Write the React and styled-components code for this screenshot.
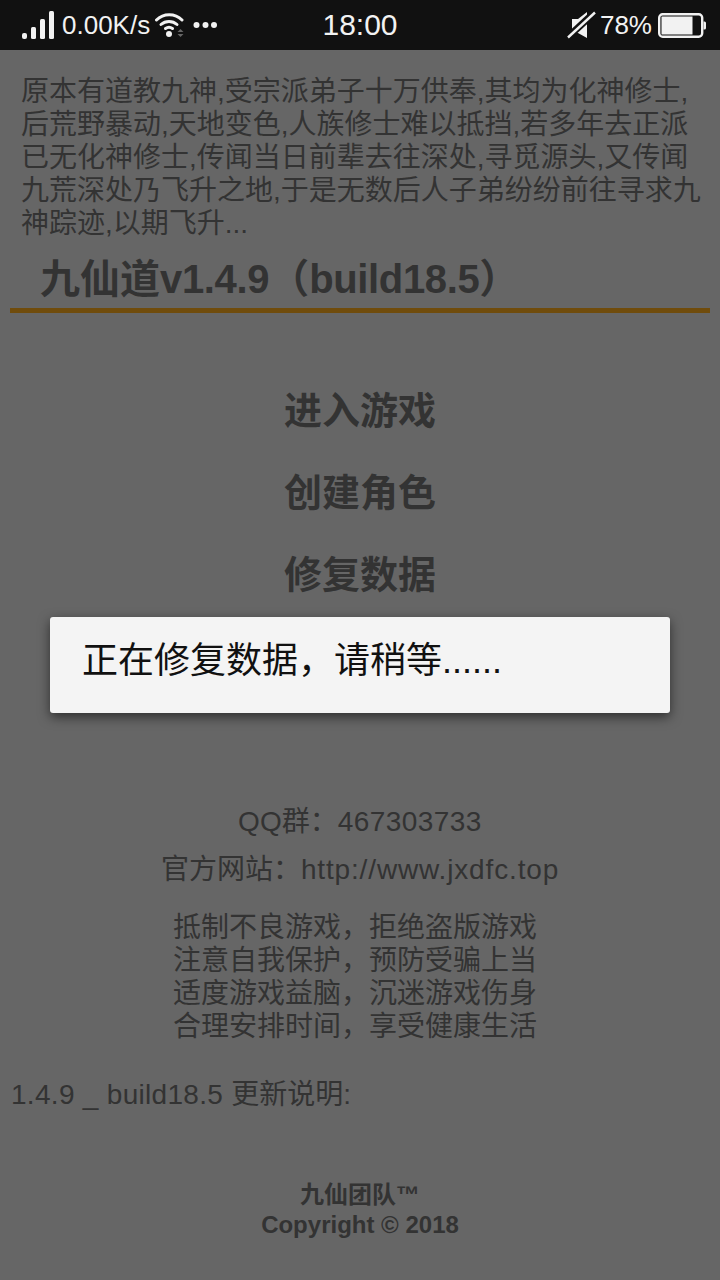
import styled, { createGlobalStyle } from 'styled-components';

const GlobalStyle = createGlobalStyle`
  html, body {
    margin: 0;
    padding: 0;
    background: #666;
  }
  body {
    font-family: 'Liberation Sans', 'Noto Sans CJK SC', sans-serif;
  }
`;

const Page = styled.div`
  position: relative;
  width: 720px;
  height: 1280px;
  overflow: hidden;
  background: #666;
  color: #333;
`;

const StatusBar = styled.div`
  height: 50px;
  background: #111;
  color: #f2f2f2;
  display: grid;
  grid-template-columns: 1fr auto 1fr;
  align-items: center;
`;

const StatusSide = styled.div`
  display: flex;
  align-items: center;
  justify-content: ${props => (props.$right ? 'flex-end' : 'flex-start')};
  padding: ${props => (props.$right ? '0 14px 0 0' : '0 0 0 22px')};
`;

const StatusText = styled.span`
  margin: 0 ${props => props.$mr || 0}px 0 ${props => props.$ml || 0}px;
  font-size: ${props => props.$size || 26}px;
  line-height: 50px;
  white-space: nowrap;
`;

const Dots = styled.svg`
  margin-left: 6px;
`;

const Intro = styled.p`
  margin: 0;
  padding: 25px 14px 0 21px;
  font-size: 28px;
  line-height: 33px;
`;

const Title = styled.h1`
  margin: 0 10px;
  padding: 13px 0 3px 30px;
  border-bottom: 5px solid #704c0c;
  font-size: 40px;
  line-height: 52px;
  font-weight: 700;
  white-space: nowrap;
`;

const Latin = styled.span`
  letter-spacing: ${props => props.$spacing}px;
`;

const Menu = styled.nav`
  display: flex;
  flex-direction: column;
  align-items: center;
  gap: 36px;
  padding-top: 75px;
`;

const MenuItem = styled.a`
  font-size: 38px;
  line-height: 46px;
  font-weight: 700;
`;

const Info = styled.div`
  display: flex;
  flex-direction: column;
  align-items: center;
  padding-top: 207px;
`;

const InfoLine = styled.div`
  font-size: 28px;
  line-height: 33px;
  margin-bottom: 15px;
`;

const Notice = styled.div`
  margin-top: 10px;
  padding-right: 10px;
  font-size: 28px;
  line-height: 33px;
  text-align: center;
`;

const Changelog = styled.div`
  padding: 35px 0 0 11px;
  font-size: 28px;
  line-height: 33px;
`;

const Footer = styled.div`
  padding-top: 69px;
  text-align: center;
  font-size: 24px;
  line-height: 30px;
  font-weight: 700;
`;

const Toast = styled.div`
  position: absolute;
  left: 50px;
  top: 617px;
  width: 620px;
  height: 96px;
  box-sizing: border-box;
  padding: 22px 32px;
  background: #f4f4f4;
  border-radius: 3px;
  box-shadow: 0 4px 12px rgba(0, 0, 0, 0.55);
  color: #111;
  font-size: 36px;
  line-height: 44px;
`;

const SignalIcon = () => (
  <svg width="33" height="30" viewBox="0 0 33 30">
    <rect x="0" y="23" width="5" height="6" rx="2" fill="#f2f2f2" />
    <rect x="9" y="17" width="5" height="12" rx="1.5" fill="#f2f2f2" />
    <rect x="18" y="9" width="5" height="20" rx="1.5" fill="#f2f2f2" />
    <rect x="27" y="1" width="5" height="28" rx="1.5" fill="#f2f2f2" />
  </svg>
);

const WifiIcon = () => (
  <svg width="32" height="26" viewBox="0 0 32 26" fill="none" stroke="#f2f2f2" strokeWidth="3" strokeLinecap="round">
    <path d="M1.5 8 C8.5 1 20 1 27 8" />
    <path d="M6 12.5 C10.5 8.5 17.5 8.5 22 12.5" />
    <path d="M10.5 16.5 C12.5 15 15.5 15 17.5 16.5" />
    <circle cx="14" cy="22" r="3" fill="#f2f2f2" stroke="none" />
    <path d="M22.5 20 L25.5 17 L28.5 20 Z" fill="#666" stroke="none" />
    <path d="M22.5 22 L25.5 25 L28.5 22 Z" fill="#666" stroke="none" />
  </svg>
);

const DotsIcon = () => (
  <Dots width="24" height="8" viewBox="0 0 24 8">
    <circle cx="3.5" cy="4" r="3" fill="#f2f2f2" />
    <circle cx="12.5" cy="4" r="3" fill="#f2f2f2" />
    <circle cx="21" cy="4" r="3" fill="#f2f2f2" />
  </Dots>
);

const MuteIcon = () => (
  <svg width="30" height="28" viewBox="0 0 30 28">
    <path d="M5 8 H11 L20 1 V27 L11 22 H5 Z" fill="#f2f2f2" />
    <path d="M1 26 L28 1" stroke="#111" strokeWidth="7" />
    <path d="M1 26.5 L28 1.5" stroke="#f2f2f2" strokeWidth="2.4" />
  </svg>
);

const BatteryIcon = () => (
  <svg width="48" height="25" viewBox="0 0 48 25">
    <rect x="1.2" y="1.2" width="43" height="22.6" rx="3.5" fill="none" stroke="#f2f2f2" strokeWidth="2.4" />
    <rect x="3.5" y="3.5" width="31" height="18" fill="#f2f2f2" />
    <path d="M45.5 8.5 H46.5 A1.5 1.5 0 0 1 48 10 V15 A1.5 1.5 0 0 1 46.5 16.5 H45.5 Z" fill="#f2f2f2" />
  </svg>
);

export default function App() {
  return (
    <Page>
      <GlobalStyle />
      <StatusBar>
        <StatusSide>
          <SignalIcon />
          <StatusText $ml={7} $mr={5}>0.00K/s</StatusText>
          <WifiIcon />
          <DotsIcon />
        </StatusSide>
        <StatusText $size={30}>18:00</StatusText>
        <StatusSide $right>
          <MuteIcon />
          <StatusText $ml={3} $mr={6}>78%</StatusText>
          <BatteryIcon />
        </StatusSide>
      </StatusBar>

      <Intro>
        原本有道教九神,受宗派弟子十万供奉,其均为化神修士,后荒野暴动,天地变色,人族修士难以抵挡,若多年去正派已无化神修士,传闻当日前辈去往深处,寻觅源头,又传闻九荒深处乃飞升之地,于是无数后人子弟纷纷前往寻求九神踪迹,以期飞升...
      </Intro>
      <Title>
        九仙道<Latin $spacing={-0.35}>v1.4.9</Latin>（<Latin $spacing={-0.35}>build18.5</Latin>）
      </Title>

      <Menu>
        <MenuItem>进入游戏</MenuItem>
        <MenuItem>创建角色</MenuItem>
        <MenuItem>修复数据</MenuItem>
      </Menu>

      <Info>
        <InfoLine>
          QQ群：<Latin $spacing={0.45}>467303733</Latin>
        </InfoLine>
        <InfoLine>
          官方网站：<Latin $spacing={0.85}>http://www.jxdfc.top</Latin>
        </InfoLine>
        <Notice>
          抵制不良游戏，拒绝盗版游戏
          <br />
          注意自我保护，预防受骗上当
          <br />
          适度游戏益脑，沉迷游戏伤身
          <br />
          合理安排时间，享受健康生活
        </Notice>
      </Info>

      <Changelog>
        <Latin $spacing={0.3}>1.4.9 _ build18.5 </Latin>更新说明:
      </Changelog>

      <Footer>
        九仙团队™
        <br />
        Copyright © 2018
      </Footer>

      <Toast>正在修复数据，请稍等......</Toast>
    </Page>
  );
}
